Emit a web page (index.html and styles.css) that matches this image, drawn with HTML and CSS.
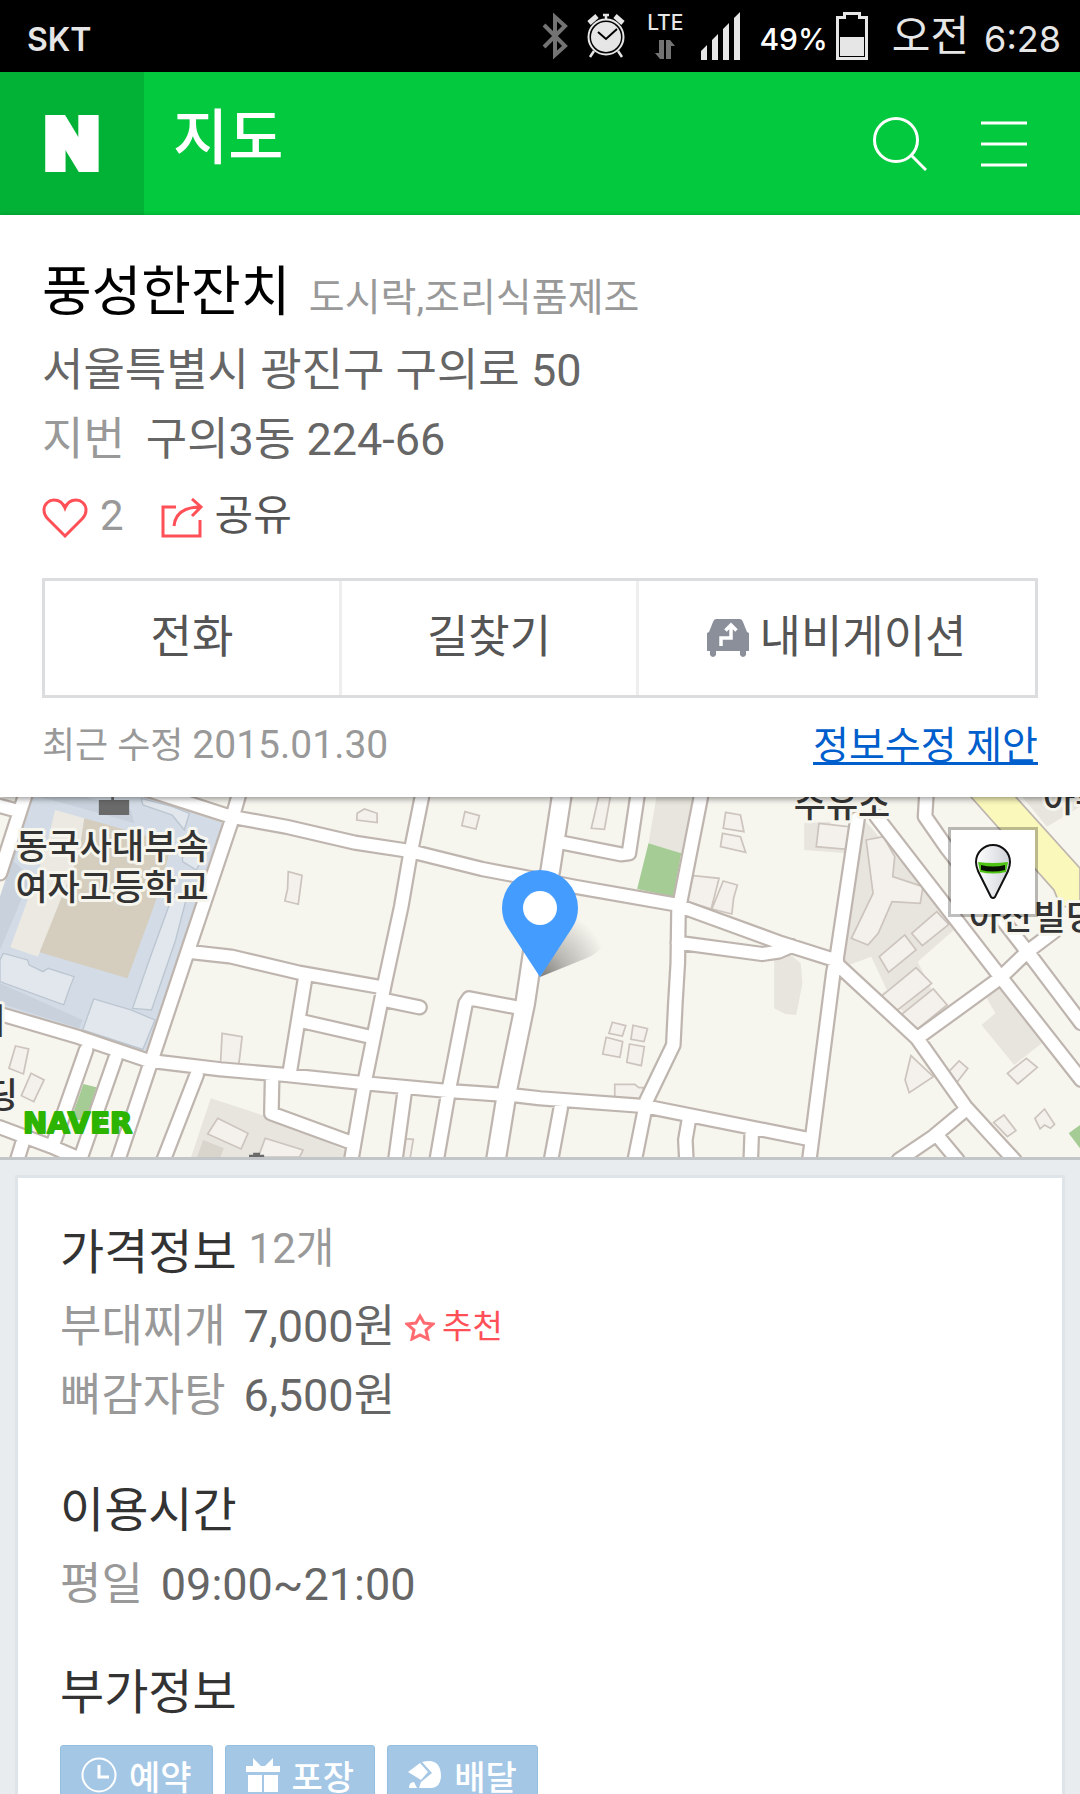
FILE: index.html
```html
<!DOCTYPE html>
<html lang="ko">
<head>
  <meta charset="UTF-8" />
  <meta name="viewport" content="width=device-width, initial-scale=1.0"/>
  <title>풍성한잔치 - 지도</title>
  <link rel="stylesheet" href="styles.css">
</head>
<body>
  <div class="status">
    <span class="carrier">SKT</span>
    <svg class="bt" width="26" height="48" viewBox="0 0 26 48" fill="none" stroke="#737373" stroke-width="4"><path d="M2 13l21 21-10 9V5l10 9L2 35"/></svg>
    <svg class="alarm" width="40" height="46" viewBox="0 0 40 46">
      <g fill="none" stroke="#e6e6e6"><circle cx="20" cy="24" r="17.500" stroke-width="2"/><path d="M20 2v5M17 2h6M8 38l-4 6M32 38l4 6" stroke-width="2.500"/><path d="M3 10l8-7M37 10l-8-7" stroke-width="5"/></g>
      <circle cx="20" cy="24" r="15" fill="#e6e6e6"/><path d="M12 19l8 7 11-10" fill="none" stroke="#000" stroke-width="2"/>
    </svg>
    <div class="lte">
      <span>LTE</span>
      <svg width="20" height="19" viewBox="0 0 20 19" fill="#737373"><path d="M4 0h5v19H5l-5-6h4zM11 0h4l5 6h-4v13h-5z"/></svg>
    </div>
    <svg class="signal" width="40" height="48" viewBox="0 0 40 48" fill="#e6e6e6"><path d="M0 48V39l6-6v15zM11 48V28l6-6v26zM22 48V17l6-6v37zM33 48V6l6-6v48z"/></svg>
    <span class="percent">49%</span>
    <svg class="battery" width="32" height="48" viewBox="0 0 32 48"><path d="M1.500 5.500h7v-4h15v4h7v41h-29z" fill="none" stroke="#e6e6e6" stroke-width="3"/><path d="M4 25h24v19H4z" fill="#e6e6e6"/></svg>
    <span class="ampm">오전</span>
    <span class="time">6:28</span>
  </div>

  <header class="header">
    <a class="logo" href="#">N</a>
    <h1>지도</h1>
    <button class="icon-btn" aria-label="검색">
      <svg width="54" height="54" viewBox="0 0 54 54" fill="none" stroke="#fff" stroke-width="3"><circle cx="23" cy="23" r="21.500"/><path d="M38 38l15 15"/></svg>
    </button>
    <button class="icon-btn" aria-label="메뉴">
      <svg width="46" height="46" viewBox="0 0 46 46" stroke="#fff" stroke-width="3"><path d="M0 2h46M0 23h46M0 44h46"/></svg>
    </button>
  </header>

  <section class="place">
    <h2>풍성한잔치 <span>도시락,조리식품제조</span></h2>
    <p class="line">서울특별시 광진구 구의로 50</p>
    <p class="line"><span class="dim">지번</span>구의3동 224-66</p>
    <div class="social">
      <button class="like">
        <svg width="46" height="40" viewBox="0 0 46 40" fill="none" stroke="#ff4f57" stroke-width="3"><path d="M23 38L6 21Q2 17 2 12C2 6 7 2 12 2c5 0 9 3 11 8 2-5 6-8 11-8 5 0 10 4 10 10q0 5-4 9z"/></svg>
        2
      </button>
      <button class="share">
        <svg width="42" height="40" viewBox="0 0 42 40" fill="none" stroke="#ff4f57" stroke-width="3"><path d="M15 9H2v29h37V22M13 28c1-11 8-19 27-19M31 1l9 8-9 9"/></svg>
        공유
      </button>
    </div>
    <div class="actions">
      <button>전화</button>
      <button>길찾기</button>
      <button>
        <svg width="42" height="38" viewBox="0 0 42 38"><path d="M9 0h24q2 0 3 3l4 10 2 1v18h-3v4q-3 4-6 0v-4H9v4q-3 4-6 0v-4H0V14l2-1 4-10q1-3 3-3z" fill="#8b8f99"/><path d="M14 27v-8h10V7M18.500 11.500L24 6l5.500 5.500" fill="none" stroke="#fff" stroke-width="3.500"/></svg>
        내비게이션
      </button>
    </div>
    <div class="edited">
      <span>최근 수정 <time>2015.01.30</time></span>
      <a href="#">정보수정 제안</a>
    </div>
  </section>

  <div class="map">
    <svg class="tiles" viewBox="0 0 1080 360" preserveAspectRatio="xMidYMid slice">
      <defs>
        <path id="roads" d="M75 10L0 250M0 48L50 62M400-10L670 80 830 110 1030 158 1190 183 1400 237 1568 270 1668 290 1960 343 2270 460 2430 512M695 10L670 100 548 475 445 795 343 1110M1227 10L1190 200 1165 350 1117 580 1062 860 1020 1110M560 487L672 500 868 548 1110 592M1115 630L1218 652M885 570L840 855M882 695L1065 738M0 672L230 742 430 812 640 838 830 855 1060 880 1300 903 1500 917 1568 925 1868 948 2338 1045M250 780L155 1060M335 805L232 1110M571 855L475 1110M0 1012L150 1070 240 1110M65 1060L50 1110M790 870L788 970 1020 1058M1500 652L1362 625 1352 640 1305 890 1268 1110M1618 155L1803 193 1826 190 1852 10M2037 10L1978 320 1970 365 1968 520 1961 640 1955 765 1878 930 1843 1110M1968 458L2213 492 2260 485 2298 468M2490 85L2430 500 2420 545 2350 1110M2545 80L2893 545 3140 870M2433 525L2663 745 2803 950 2878 1035 2945 1110M2663 745L2903 565 2983 485 3060 425M2690 10L2686 80 2750 175 2983 485 3140 700M2803 960L2710 1040 2610 1110M2728 1045L2780 1110M1628 955L1600 1110M2000 990L1990 1050 1993 1110M2183 1020L2180 1110M1175 905L1148 1110"/>
        <path id="main-road" d="M1632 10L1598 240 1548 480 1525 640 1473 900 1440 1110"/>
      </defs>
      <!-- tiles are drawn on a 3136 wide grid -->
      <g transform="scale(.3444 .3333) translate(0 -21)">
        <path d="M0 0h3136v1110H0z" fill="#f6f5ee"/>
        <path d="M95 10L400 10 650 100 425 785 0 650V320z" fill="#d3dce6"/>
        <path d="M75 100L40 215 90 260 0 480V320zM0 580L240 690 230 715 0 640zM150 30L340 85 390 100 380 60 250 21H110z" fill="#c8d1dc"/>
        <path d="M160 60L245 85 225 220 110 500 30 472 130 190z" fill="#ebe9e1"/>
        <path d="M245 85L500 160 450 340 370 565 115 487 230 190z" fill="#d5cdbd"/>
        <g fill="#e2e7ed" stroke="#bcc6d1" stroke-width="4">
          <path d="M10 490L80 510 85 525 125 545 140 535 215 560 200 600 185 645 0 575V510z"/>
          <path d="M272 627L380 660 450 690 415 778 240 720zM500 320L540 330 510 450 440 660 385 655 430 520zM410 25L500 50 550 70 535 120 500 75 415 45zM530 190L590 200 570 240 530 215z"/>
        </g>
        <path d="M1908 10H2015L1978 190 1883 160zM2335 100L2410 95 2460 190 2335 180zM2248 505L2290 490 2325 520 2330 580 2312 675 2280 672 2248 655zM2863 620L2900 585 3025 760 2945 825 2850 705 2890 670zM2510 90L2780 410 2665 515 2710 610 2650 690 2450 510zM2960 10H3136V50L3040 110zM612 925L790 985 1000 1080V1101H555z" fill="#e8e5de"/>
        <path d="M2530 500L2575 600 2545 620 2450 530z" fill="#f6f5ee"/>
        <path d="M590 1050L650 1075 640 1101H572z" fill="#d9d4cc"/>
        <path d="M1883 160L1978 190 1955 320 1850 297zM242 882L280 892 250 990 205 990zM3136 1005L3103 1030 3136 1075z" fill="#a5cc94"/>
        <path d="M2810 10H2940L3136 235V350H3080L3060 300z" fill="#fbf8bb" stroke="#bfb5af" stroke-width="5"/>
        <g fill="#f4f1ec" stroke="#cdc4be" stroke-width="5">
          <path d="M1037 70L1058 57 1095 70V98L1036 90zM1350 65L1392 77 1382 117 1341 107zM837 245L877 256 866 343 827 333 835 297zM645 730L703 740 693 827H640z"/>
          <path d="M45 768L83 777 68 852 26 835zM90 850L128 870 98 935 62 917zM1160 1045L1200 1048 1190 1110H1150zM1738 21L1717 115 1755 118 1772 21z"/>
          <path d="M2107 67L2150 75 2160 125 2100 115zM2098 130L2150 140 2165 187 2092 170zM2013 257L2088 265 2065 357 1993 333zM2100 273L2141 285 2130 325 2125 372 2067 357z"/>
          <path d="M2378 100L2465 110 2460 178 2370 170zM2515 150L2565 140 2598 200 2592 260 2680 290 2672 340 2590 335 2550 430 2520 465 2472 445 2535 310zM2647 430L2720 365 2755 403 2678 467zM2553 500L2627 435 2660 480 2580 547zM2558 620L2660 533 2705 580 2600 665zM2610 680L2710 597 2750 645 2652 727z"/>
          <path d="M1778 697L1817 707 1807 738 1768 730zM1838 706L1880 716 1870 755 1832 748zM1760 742L1808 755 1800 802 1750 792zM1828 762L1871 770 1862 827 1820 817zM1785 883H1843L1855 893H1868V930L1835 936 1785 920zM2645 797L2710 860 2640 908 2628 870zM2750 850L2785 813 2810 835 2775 882zM2925 850L2980 805 3012 832 2955 882zM2885 997L2915 975 2950 1022 2925 1040zM3005 985L3033 957 3062 1003 3050 1015 3033 1005 3020 1017z"/>
          <path d="M632 985L720 1030 700 1077 603 1032zM770 1045L880 1080 870 1101H750z"/>
        </g>
        <g fill="none" stroke-linecap="round" stroke-linejoin="round">
          <use href="#roads" stroke="#bfb5af" stroke-width="49"/>
          <use href="#main-road" stroke="#bfb5af" stroke-width="64"/>
          <use href="#roads" stroke="#fff" stroke-width="36"/>
          <use href="#main-road" stroke="#fff" stroke-width="51"/>
        </g>
        <path d="M287 30h88v45h-88zM323 15h8v15h-8zM735 1088h20v6h12v10h-44v-10h12z" fill="#6a6a6a"/>
      </g>
      <g class="labels">
        <text x="112" y="62" text-anchor="middle">동국사대부속</text>
        <text x="112" y="103" text-anchor="middle">여자고등학교</text>
        <text x="842" y="20" text-anchor="middle">주유소</text>
        <text x="1043" y="15">아주</text>
        <text x="969" y="133">아산빌딩</text>
        <text x="5" y="237" text-anchor="end">대</text>
        <text x="18" y="311" text-anchor="end">빌딩</text>
        <text class="naver" x="23" y="336">NAVER</text>
      </g>
    </svg>
    <svg class="pin" width="140" height="110" viewBox="0 0 140 110">
      <defs><radialGradient id="shade" gradientUnits="userSpaceOnUse" cx="70" cy="108" r="70"><stop offset="0" stop-color="#000" stop-opacity=".5"/><stop offset=".4" stop-color="#000" stop-opacity=".25"/><stop offset="1" stop-color="#000" stop-opacity="0"/></radialGradient></defs>
      <path d="M70 108L106 46q36 0 30 24-4 14-24 21z" fill="url(#shade)"/>
      <path d="M70 108L38 59Q32 50 32 39a38 38 0 0 1 76 0q0 11-6 20z" fill="#449cff"/>
      <circle cx="70" cy="39" r="17" fill="#fff"/>
    </svg>
    <button class="view" aria-label="거리뷰">
      <svg width="38" height="56" viewBox="0 0 38 56">
        <defs><linearGradient id="body"><stop stop-color="#fff"/><stop offset="1" stop-color="#cfd2d8"/></linearGradient></defs>
        <path d="M17 53L4 27Q2 22 2 18a17 17 0 0 1 34 0q0 4-2 9L21 53q-2 2-4 0z" fill="url(#body)" stroke="#111" stroke-width="2"/>
        <path d="M4 18q15 2 30 0l-2 10q-13 3-26 0z" fill="#4fc414"/><path d="M7 21q12 3 24 0v5q-12 3-24 0z" fill="#071000"/>
      </svg>
    </button>
  </div>

  <main class="card">
    <section class="prices">
      <h3>가격정보 <span>12개</span></h3>
      <p class="line"><span class="dim">부대찌개</span>7,000원
        <span class="pick"><svg width="30" height="28" viewBox="0 0 30 28" fill="none" stroke="#ff6b70" stroke-width="3"><path d="M15 3l4 7 9 1-7 6 2 9-8-4-8 4 2-9-7-6 9-1z"/></svg>추천</span>
      </p>
      <p class="line"><span class="dim">뼈감자탕</span>6,500원</p>
    </section>
    <section>
      <h3>이용시간</h3>
      <p class="line"><span class="dim">평일</span>09:00~21:00</p>
    </section>
    <section>
      <h3>부가정보</h3>
      <ul class="badges">
        <li><svg width="36" height="36" viewBox="0 0 36 36" fill="none" stroke="#fff" stroke-width="2"><circle cx="18" cy="18" r="16.500"/><path d="M18 8v12h10" stroke-width="3"/></svg>예약</li>
        <li><svg width="34" height="34" viewBox="0 0 34 34" fill="#fff"><path d="M0 8h7V0l8 8h4l8-8v8h7v6H0zM2 17h14v17H2zM18 17h14v17H18z"/></svg>포장</li>
        <li><svg width="34" height="30" viewBox="0 0 34 30" fill="#fff"><path d="M0 12L12 3l8 9-7 8zM14 2q18-5 19 13 0 12-9 13H11l2-6 11-9zM1 28q0-6 5-6l3 6z"/></svg>배달</li>
      </ul>
    </section>
  </main>
</body>
</html>
```

FILE: styles.css
```css
* {
  box-sizing: border-box;
}
html {
  overflow: hidden;
}
body {
  margin: 0;
  background: #e8ecef;
  color: #666;
  font-family: Roboto, 'Noto Sans CJK KR', sans-serif;
  font-size: 45px;
}
h1, h2, h3, p, ul {
  margin: 0;
  padding: 0;
  font-weight: 400;
}
button {
  border: none;
  background: none;
  padding: 0;
  color: #555;
  font: inherit;
  cursor: pointer;
}
svg {
  display: block;
  flex: none;
}

/* status bar */
.status {
  display: flex;
  align-items: center;
  height: 72px;
  padding: 0 19px 0 27px;
  background: #000;
  color: #e6e6e6;
  font-family: Inter, 'Noto Sans CJK KR', sans-serif;
  font-size: 36px;
  line-height: 72px;
}
.carrier {
  margin-right: auto;
  padding-top: 8px;
  font-size: 32px;
  font-weight: 600;
}
.alarm {
  margin-left: 18px;
}
.lte {
  display: flex;
  flex-direction: column;
  align-items: center;
  gap: 8px;
  margin: 0 18px 0 21px;
  font-size: 21px;
  font-weight: 500;
  line-height: 18px;
}
.percent {
  margin: 6px 8px 0 18px;
  color: #fff;
  font-size: 30px;
  font-weight: 500;
}
.ampm {
  margin-left: 24px;
  font-size: 42px;
}
.time {
  margin-left: 15px;
  padding-top: 6px;
}

/* header */
.header {
  display: flex;
  align-items: center;
  height: 143px;
  padding-right: 53px;
  background: #02c93d;
  color: #fff;
}
.logo {
  width: 144px;
  background: #02b237;
  color: #fff;
  font: 900 70px/143px Inter, sans-serif;
  text-align: center;
  text-decoration: none;
  -webkit-text-stroke: 6px #fff;
}
.header h1 {
  flex: 1;
  padding: 0 0 22px 29px;
  font-size: 60px;
  font-weight: 500;
}
.icon-btn {
  margin-left: 54px;
}

/* place summary */
.place {
  position: relative;
  z-index: 1;
  padding: 40px 42px 21px;
  background: #fff;
  box-shadow: 0 2px 6px rgba(0,0,0,0.4);
}
.place h2 {
  color: #000;
  font-size: 54px;
  line-height: 75px;
}
.place h2 span {
  margin-left: 5px;
  color: #999;
  font-size: 39px;
}
.line {
  display: flex;
  align-items: center;
  line-height: 69px;
}
.dim {
  margin-right: 21px;
  color: #999;
}
.social {
  display: flex;
  gap: 37px;
  margin-top: 9px;
  font-size: 42px;
  line-height: 66px;
}
.social button {
  display: flex;
  align-items: center;
  gap: 12px;
}
.social svg {
  margin-top: 4px;
}
.social .like {
  color: #999;
}
.actions {
  display: grid;
  grid-template-columns: 3fr 3fr 4fr;
  height: 120px;
  margin-top: 29px;
  border: 3px solid #dcdddf;
}
.actions button {
  display: flex;
  align-items: center;
  justify-content: center;
  gap: 10px;
  padding-bottom: 9px;
  border-right: 3px solid #eee;
}
.actions button:last-child {
  border-right: none;
}
.actions svg {
  margin-top: 9px;
}
.edited {
  display: flex;
  align-items: center;
  justify-content: space-between;
  margin-top: 17px;
  color: #999;
  font-size: 36px;
  line-height: 60px;
}
.edited time {
  font-size: 39px;
}
.edited a {
  color: #005fcc;
  font-size: 39px;
  text-decoration-thickness: 3px;
  text-underline-offset: 3px;
  text-decoration-skip-ink: none;
}

/* map */
.map {
  position: relative;
  height: 363px;
  border-bottom: 3px solid #c3c6c9;
  overflow: hidden;
}
.tiles {
  width: 100%;
  height: 360px;
}
.labels {
  fill: #333;
  stroke: #f6f5ee;
  stroke-width: 6px;
  stroke-linejoin: round;
  paint-order: stroke;
  font-family: 'Noto Sans CJK KR', sans-serif;
  font-size: 35px;
  font-weight: 500;
}
.naver {
  fill: #2db400;
  stroke: #2db400;
  stroke-width: 2px;
  font-family: 'DejaVu Sans', sans-serif;
  font-size: 29px;
  font-weight: 700;
}
.pin {
  position: absolute;
  top: 72px;
  left: 50%;
  margin-left: -70px;
}
.view {
  position: absolute;
  top: 30px;
  right: 42px;
  display: flex;
  align-items: center;
  justify-content: center;
  width: 90px;
  height: 90px;
  border: 3px solid rgba(0,0,0,0.25);
  background: #fff;
  background-clip: padding-box;
}

/* details */
.card {
  margin: 15px 15px 0;
  padding: 36px 42px;
  border: 3px solid #dfe4e8;
  background: #fff;
}
.card section + section {
  margin-top: 35px;
}
.card .prices {
  padding-bottom: 7px;
}
.card h3 {
  color: #333;
  font-size: 48px;
  line-height: 78px;
}
.card h3 span {
  color: #999;
  font-size: 42px;
  line-height: 60px;
  vertical-align: 6px;
}
.card .dim {
  margin-right: 18px;
}
.pick {
  display: flex;
  align-items: center;
  gap: 7px;
  margin-left: 10px;
  color: #ff4f57;
  font-size: 33px;
}
.badges {
  display: flex;
  gap: 12px;
  margin-top: 13px;
  list-style: none;
}
.badges li {
  display: flex;
  align-items: center;
  gap: 12px;
  height: 60px;
  padding: 0 20px;
  border: 1px solid #94bfdf;
  border-radius: 3px;
  background: #a5c7e6;
  color: #fff;
  font-size: 34px;
  font-weight: 500;
}
```
